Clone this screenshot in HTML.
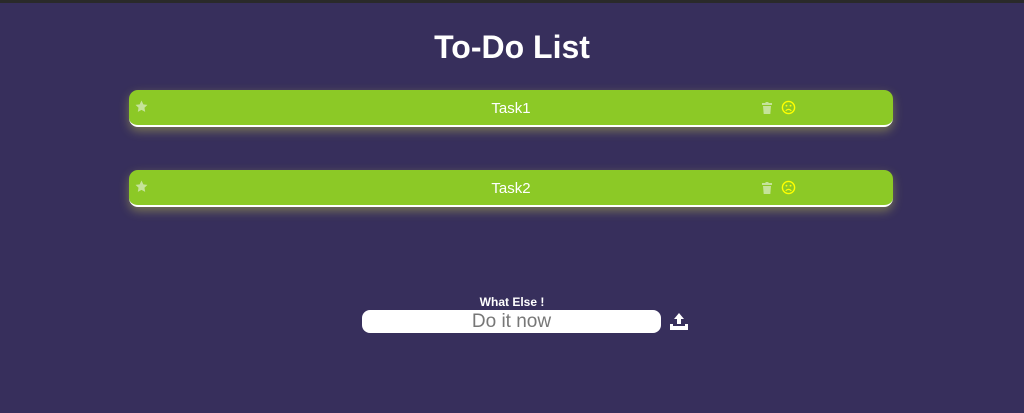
<!DOCTYPE html>
<html><head><style>
body{margin:0;width:1024px;height:413px;background:#372f5c;font-family:"Liberation Sans",sans-serif;position:relative;overflow:hidden}
.top{position:absolute;left:0;top:0;width:1024px;height:3px;background:#2a2a2a}
h1{position:absolute;top:29px;left:0;width:1024px;text-align:center;margin:0;color:#fff;font-size:32px;font-weight:bold}
.bar{position:absolute;left:129px;width:764px;height:35px;background:#8cc926;border-radius:9px;border-bottom:2px solid #fff;box-shadow:0 4px 10px rgba(200,200,80,.45)}
.bar .t{position:absolute;left:0;width:764px;text-align:center;top:10px;color:#fff;font-size:15px}
.star{position:absolute;left:6px;top:10px}
.trash{position:absolute;left:633px;top:12px}
.face{position:absolute;left:652px;top:10px}
.lbl{position:absolute;top:295px;left:412px;width:200px;text-align:center;color:#fff;font-weight:bold;font-size:12px}
.inp{position:absolute;left:362px;top:310px;width:299px;height:23px;background:#fff;border-radius:8px;text-align:center;color:#777;font-size:19px;line-height:24px}
</style></head><body>
<div class="top"></div>
<h1>To-Do List</h1>
<div class="bar" style="top:90px"><div class="t">Task1</div>
<svg class="star" width="13" height="13" viewBox="0 0 24 24"><path d="M12 1l3.4 7 7.6 1-5.5 5.3 1.3 7.7L12 18.3 5.2 22l1.3-7.7L1 9l7.6-1z" fill="#c5e39a"/></svg>
<svg class="trash" width="10" height="12" viewBox="0 0 10 12"><rect x="0" y="1" width="10" height="2" fill="#c5e39a"/><rect x="3.5" y="0" width="3" height="2" fill="#c5e39a"/><path d="M1 4h8l-.7 8H1.7z" fill="#c5e39a"/></svg>
<svg class="face" width="15" height="15" viewBox="0 0 16 16"><circle cx="8" cy="8" r="6.5" fill="none" stroke="#ff0" stroke-width="1.5"/><circle cx="5.8" cy="6" r="1" fill="#ff0"/><circle cx="10.2" cy="6" r="1" fill="#ff0"/><path d="M5 11.5q3-3 6 0" fill="none" stroke="#ff0" stroke-width="1.3"/></svg>
</div>
<div class="bar" style="top:170px"><div class="t">Task2</div>
<svg class="star" width="13" height="13" viewBox="0 0 24 24"><path d="M12 1l3.4 7 7.6 1-5.5 5.3 1.3 7.7L12 18.3 5.2 22l1.3-7.7L1 9l7.6-1z" fill="#c5e39a"/></svg>
<svg class="trash" width="10" height="12" viewBox="0 0 10 12"><rect x="0" y="1" width="10" height="2" fill="#c5e39a"/><rect x="3.5" y="0" width="3" height="2" fill="#c5e39a"/><path d="M1 4h8l-.7 8H1.7z" fill="#c5e39a"/></svg>
<svg class="face" width="15" height="15" viewBox="0 0 16 16"><circle cx="8" cy="8" r="6.5" fill="none" stroke="#ff0" stroke-width="1.5"/><circle cx="5.8" cy="6" r="1" fill="#ff0"/><circle cx="10.2" cy="6" r="1" fill="#ff0"/><path d="M5 11.5q3-3 6 0" fill="none" stroke="#ff0" stroke-width="1.3"/></svg>
</div>
<div class="lbl">What Else !</div>
<div class="inp">Do it now</div>
<svg style="position:absolute;left:670px;top:313px" width="18" height="17" viewBox="0 0 18 17"><path d="M9 0l5 6h-3v5H7V6H4z" fill="#fff"/><path d="M0 11h3v2h12v-2h3v6H0z" fill="#fff"/></svg>
</body></html>
